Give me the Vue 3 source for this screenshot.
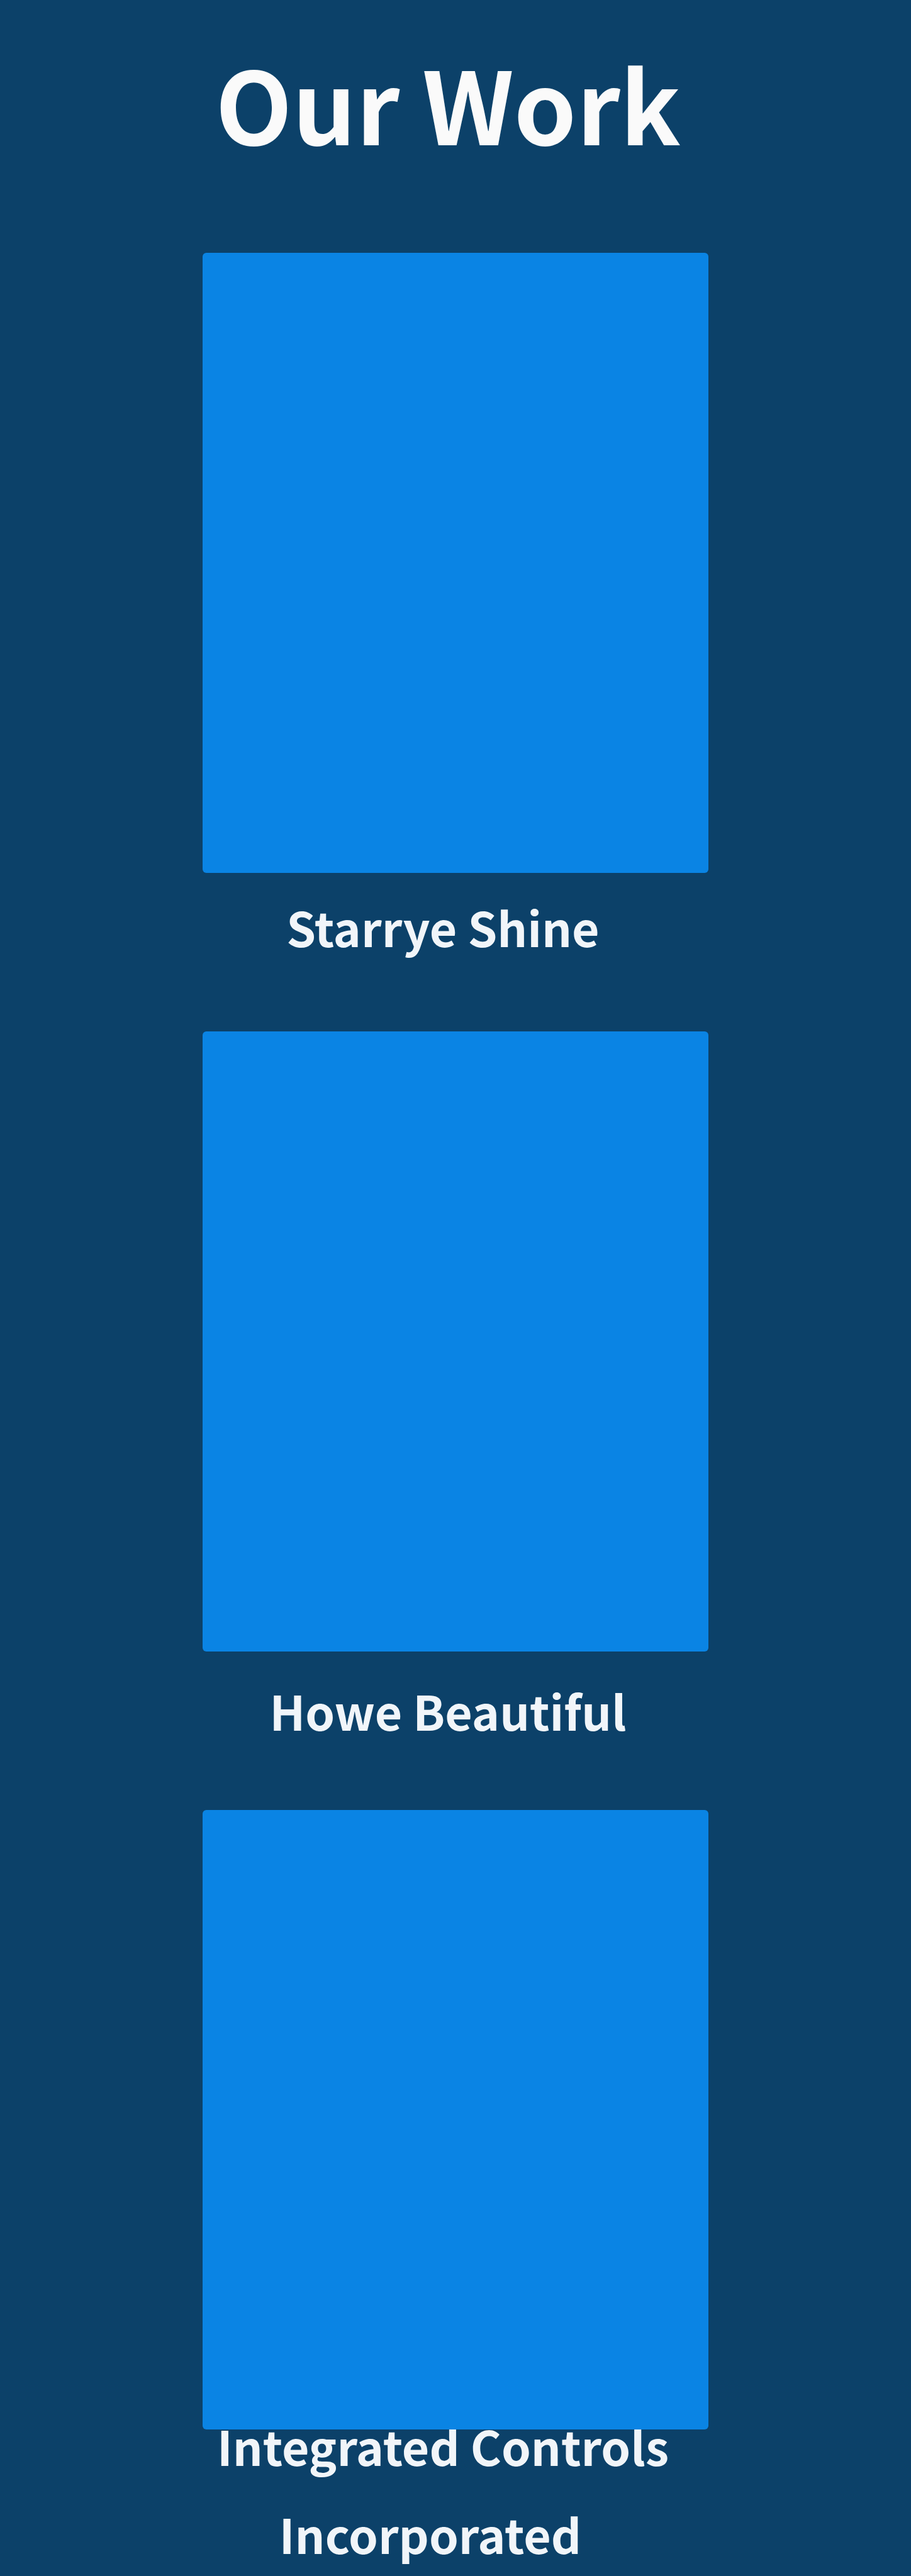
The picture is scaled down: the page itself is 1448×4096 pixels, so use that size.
<script setup>
const projects = [
  { slug: 'starrye', lines: ['Starrye Shine'] },
  { slug: 'howe', lines: ['Howe Beautiful'] },
  { slug: 'integrated', lines: ['Integrated Controls', 'Incorporated'] },
]
</script>

<template>
  <main class="work">
    <h1 class="title">Our Work</h1>
    <section class="projects">
      <article v-for="project in projects" :key="project.slug" class="project" :class="project.slug">
        <div class="preview"></div>
        <h2 class="name">
          <span v-for="line in project.lines" :key="line" class="line">{{ line }}</span>
        </h2>
      </article>
    </section>
  </main>
</template>

<style>
body {
  margin: 0;
  background: #0c4169;
}
</style>

<style scoped>
.work {
  min-height: 100vh;
  box-sizing: border-box;
  padding-top: 62px;
  background: #0c4169;
  font-family: "Noto Sans CJK SC", "Open Sans", sans-serif;
  font-weight: 700;
  text-align: center;
}

.title {
  margin: 0;
  padding-right: 24px;
  height: 340px;
  font-size: 159px;
  line-height: 200px;
  color: #fafafa;
}

.projects {
  display: flex;
  flex-direction: column;
}

.project {
  display: flex;
  flex-direction: column;
  align-items: center;
}

/* The preview stays above a long name that reaches up to its edge. */
.preview {
  z-index: 1;
  width: 55.5%;
  aspect-ratio: 172 / 211;
  border-radius: 6px;
  background: #0a84e4;
}

.name {
  box-sizing: border-box;
  width: 55.5%;
  height: 252px;
  margin: 0;
  padding: 16px 40px 0 0;
  font-size: 75px;
  line-height: 140px;
  color: #f1f5f9;
}

.line {
  display: block;
}

.howe .name {
  padding: 24px 24px 0 0;
}

.integrated .name {
  height: auto;
  margin-top: -44px;
  padding: 0 40px 0 0;
}

.integrated .line + .line {
  padding-right: 40px;
}
</style>
